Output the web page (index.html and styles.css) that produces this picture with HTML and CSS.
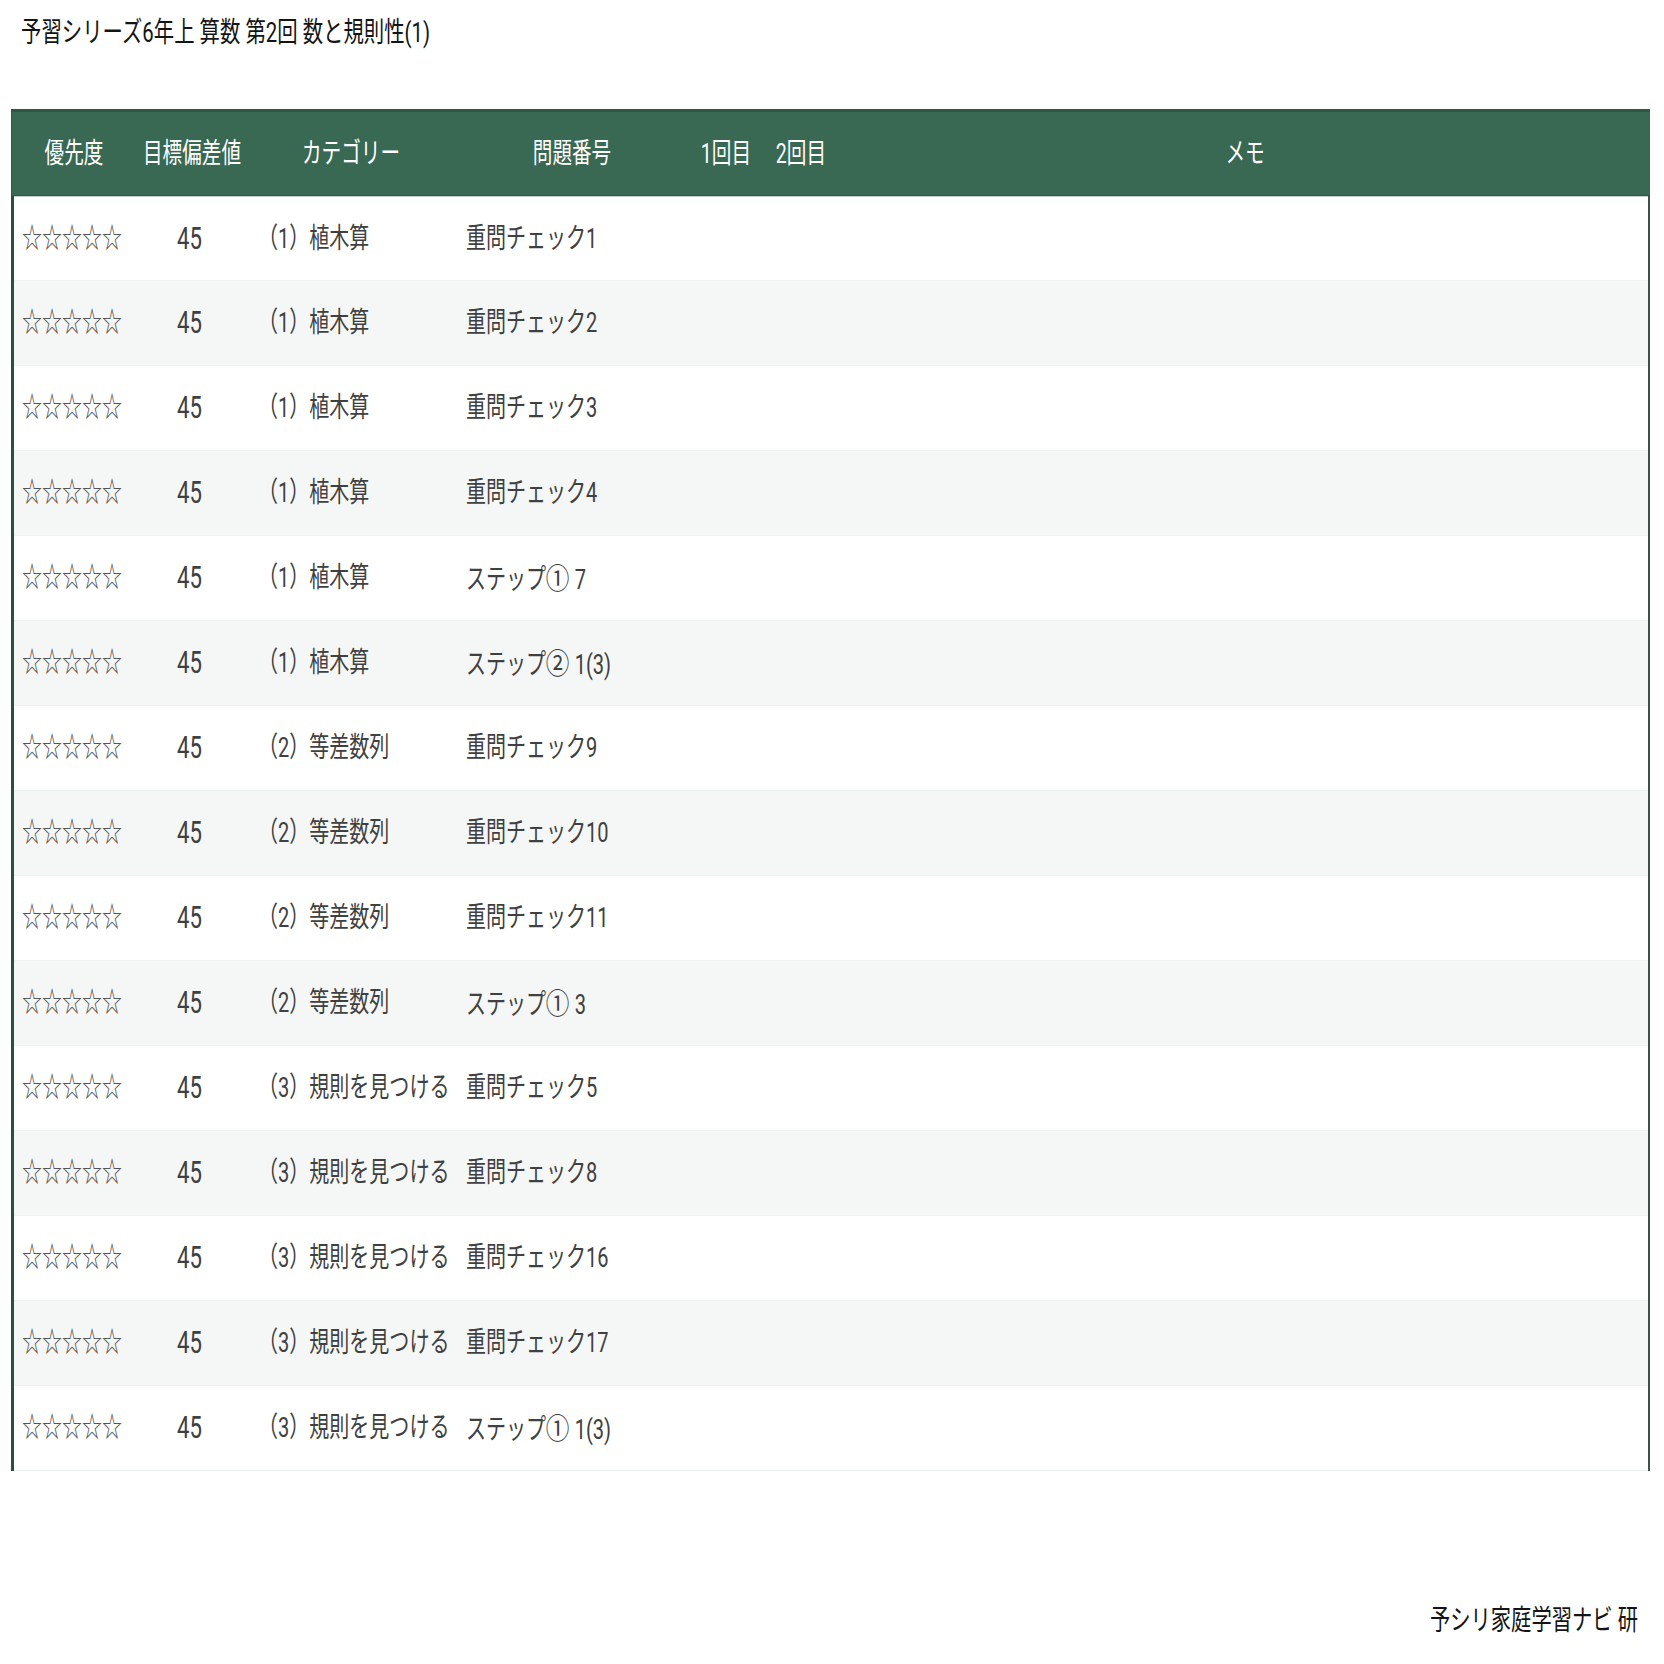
FILE: index.html
```html
<!DOCTYPE html>
<html lang="ja">
<head>
<meta charset="utf-8">
<title>予習シリーズ6年上 算数 第2回 数と規則性(1)</title>
<link rel="stylesheet" href="styles.css">
</head>
<body>
<h1 class="title"><span class="sx">予習シリーズ6年上 算数 第2回 数と規則性(1)</span></h1>

<div class="sheet">
  <div class="head">
    <div class="cell ctr"><span class="sx mid">優先度</span></div>
    <div class="cell ctr"><span class="sx mid">目標偏差値</span></div>
    <div class="cell ctr"><span class="sx mid">カテゴリー</span></div>
    <div class="cell ctr"><span class="sx mid">問題番号</span></div>
    <div class="cell ctr"><span class="sx mid">1回目</span></div>
    <div class="cell ctr"><span class="sx mid">2回目</span></div>
    <div class="cell ctr"><span class="sx mid">メモ</span></div>
  </div>

  <div class="rows">
    <div class="row">
      <div class="cell stars"><span class="sx">☆☆☆☆☆</span></div>
      <div class="cell ctr dev"><span class="sx mid num">45</span></div>
      <div class="cell"><span class="sx">（1）植木算</span></div>
      <div class="cell"><span class="sx">重問チェック1</span></div>
      <div class="cell"></div><div class="cell"></div><div class="cell"></div>
    </div>
    <div class="row">
      <div class="cell stars"><span class="sx">☆☆☆☆☆</span></div>
      <div class="cell ctr dev"><span class="sx mid num">45</span></div>
      <div class="cell"><span class="sx">（1）植木算</span></div>
      <div class="cell"><span class="sx">重問チェック2</span></div>
      <div class="cell"></div><div class="cell"></div><div class="cell"></div>
    </div>
    <div class="row">
      <div class="cell stars"><span class="sx">☆☆☆☆☆</span></div>
      <div class="cell ctr dev"><span class="sx mid num">45</span></div>
      <div class="cell"><span class="sx">（1）植木算</span></div>
      <div class="cell"><span class="sx">重問チェック3</span></div>
      <div class="cell"></div><div class="cell"></div><div class="cell"></div>
    </div>
    <div class="row">
      <div class="cell stars"><span class="sx">☆☆☆☆☆</span></div>
      <div class="cell ctr dev"><span class="sx mid num">45</span></div>
      <div class="cell"><span class="sx">（1）植木算</span></div>
      <div class="cell"><span class="sx">重問チェック4</span></div>
      <div class="cell"></div><div class="cell"></div><div class="cell"></div>
    </div>
    <div class="row">
      <div class="cell stars"><span class="sx">☆☆☆☆☆</span></div>
      <div class="cell ctr dev"><span class="sx mid num">45</span></div>
      <div class="cell"><span class="sx">（1）植木算</span></div>
      <div class="cell"><span class="sx">ステップ<span class="en">①</span> 7</span></div>
      <div class="cell"></div><div class="cell"></div><div class="cell"></div>
    </div>
    <div class="row">
      <div class="cell stars"><span class="sx">☆☆☆☆☆</span></div>
      <div class="cell ctr dev"><span class="sx mid num">45</span></div>
      <div class="cell"><span class="sx">（1）植木算</span></div>
      <div class="cell"><span class="sx">ステップ<span class="en">②</span> 1(3)</span></div>
      <div class="cell"></div><div class="cell"></div><div class="cell"></div>
    </div>
    <div class="row">
      <div class="cell stars"><span class="sx">☆☆☆☆☆</span></div>
      <div class="cell ctr dev"><span class="sx mid num">45</span></div>
      <div class="cell"><span class="sx">（2）等差数列</span></div>
      <div class="cell"><span class="sx">重問チェック9</span></div>
      <div class="cell"></div><div class="cell"></div><div class="cell"></div>
    </div>
    <div class="row">
      <div class="cell stars"><span class="sx">☆☆☆☆☆</span></div>
      <div class="cell ctr dev"><span class="sx mid num">45</span></div>
      <div class="cell"><span class="sx">（2）等差数列</span></div>
      <div class="cell"><span class="sx">重問チェック10</span></div>
      <div class="cell"></div><div class="cell"></div><div class="cell"></div>
    </div>
    <div class="row">
      <div class="cell stars"><span class="sx">☆☆☆☆☆</span></div>
      <div class="cell ctr dev"><span class="sx mid num">45</span></div>
      <div class="cell"><span class="sx">（2）等差数列</span></div>
      <div class="cell"><span class="sx">重問チェック11</span></div>
      <div class="cell"></div><div class="cell"></div><div class="cell"></div>
    </div>
    <div class="row">
      <div class="cell stars"><span class="sx">☆☆☆☆☆</span></div>
      <div class="cell ctr dev"><span class="sx mid num">45</span></div>
      <div class="cell"><span class="sx">（2）等差数列</span></div>
      <div class="cell"><span class="sx">ステップ<span class="en">①</span> 3</span></div>
      <div class="cell"></div><div class="cell"></div><div class="cell"></div>
    </div>
    <div class="row">
      <div class="cell stars"><span class="sx">☆☆☆☆☆</span></div>
      <div class="cell ctr dev"><span class="sx mid num">45</span></div>
      <div class="cell"><span class="sx">（3）規則を見つける</span></div>
      <div class="cell"><span class="sx">重問チェック5</span></div>
      <div class="cell"></div><div class="cell"></div><div class="cell"></div>
    </div>
    <div class="row">
      <div class="cell stars"><span class="sx">☆☆☆☆☆</span></div>
      <div class="cell ctr dev"><span class="sx mid num">45</span></div>
      <div class="cell"><span class="sx">（3）規則を見つける</span></div>
      <div class="cell"><span class="sx">重問チェック8</span></div>
      <div class="cell"></div><div class="cell"></div><div class="cell"></div>
    </div>
    <div class="row">
      <div class="cell stars"><span class="sx">☆☆☆☆☆</span></div>
      <div class="cell ctr dev"><span class="sx mid num">45</span></div>
      <div class="cell"><span class="sx">（3）規則を見つける</span></div>
      <div class="cell"><span class="sx">重問チェック16</span></div>
      <div class="cell"></div><div class="cell"></div><div class="cell"></div>
    </div>
    <div class="row">
      <div class="cell stars"><span class="sx">☆☆☆☆☆</span></div>
      <div class="cell ctr dev"><span class="sx mid num">45</span></div>
      <div class="cell"><span class="sx">（3）規則を見つける</span></div>
      <div class="cell"><span class="sx">重問チェック17</span></div>
      <div class="cell"></div><div class="cell"></div><div class="cell"></div>
    </div>
    <div class="row">
      <div class="cell stars"><span class="sx">☆☆☆☆☆</span></div>
      <div class="cell ctr dev"><span class="sx mid num">45</span></div>
      <div class="cell"><span class="sx">（3）規則を見つける</span></div>
      <div class="cell"><span class="sx">ステップ<span class="en">①</span> 1(3)</span></div>
      <div class="cell"></div><div class="cell"></div><div class="cell"></div>
    </div>
  </div>
</div>

<footer class="credit"><span class="sx end">予シリ家庭学習ナビ 研</span></footer>
</body>
</html>
```

FILE: styles.css
```css
* { box-sizing: border-box; }

html, body {
  margin: 0;
  padding: 0;
  background: #ffffff;
}

body {
  width: 1664px;
  font-family: Roboto, "Noto Sans CJK JP", sans-serif;
  font-size: 28px;
  line-height: 28px;
  color: #404040;
}

/* horizontally condensed text, as in the reference */
.sx {
  display: inline-block;
  white-space: nowrap;
  transform: scaleX(0.715);
  transform-origin: 0 50%;
}
.sx.mid { transform-origin: 50% 50%; }
.sx.end { transform-origin: 100% 50%; }

/* enclosed numerals are drawn rounder than the condensed text */
.en {
  display: inline-block;
  font-family: "Noto Sans CJK JP", sans-serif;
  transform: scaleX(1.18);
  margin: 0 3px 0 2px;
}

.title {
  margin: 0;
  padding: 19px 0 0 21px;
  height: 109px;
  font-size: 28px;
  line-height: 28px;
  font-weight: 400;
  color: #141414;
}
.title .sx { transform: scaleX(0.728); }

.sheet {
  margin: 0 14px 0 11px;
  width: 1639px;
}

.head {
  display: grid;
  grid-template-columns: 125px 110px 208px 234px 74px 76px 812px;
  height: 87px;
  background: #396853;
  border-top: 3px solid #2d5644;
  border-bottom: 1px solid #2f5a47;
  border-left: 1px solid #30594a;
  color: #ffffff;
}
.head .sx { transform: scaleX(0.70); }

.rows {
  border-left: 3px solid #2b4f40;
  border-right: 2px solid #42504a;
}

.row {
  display: grid;
  grid-template-columns: 122px 110px 208px 234px 74px 76px 810px;
  height: 85px;
  border-bottom: 1px solid #eef2f0;
}
.row:first-child { border-top: 1px solid #c9cecc; }
.row:nth-child(even) { background: #f5f7f7; }

.cell {
  display: flex;
  align-items: center;
  min-width: 0;
  padding: 0 12px;
}
.cell.ctr {
  justify-content: center;
  padding: 0;
}
.cell.dev {
  padding-right: 4px;
}
.cell.stars {
  padding-left: 8px;
  color: #555555;
}

.num {
  font-size: 31px;
}

.credit {
  margin-top: 136px;
  padding-right: 26px;
  text-align: right;
  color: #141414;
}
.credit .sx { transform: scaleX(0.725); }
```
